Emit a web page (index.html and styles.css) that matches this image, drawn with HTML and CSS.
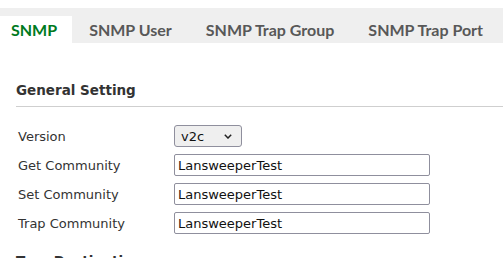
FILE: index.html
```html
<!DOCTYPE html>
<html>
<head>
<meta charset="utf-8">
<link rel="stylesheet" href="styles.css">
</head>
<body>
<div class="page">
  <nav class="tabs">
    <div class="tab active">SNMP</div>
    <div class="tab">SNMP User</div>
    <div class="tab">SNMP Trap Group</div>
    <div class="tab">SNMP Trap Port</div>
  </nav>
  <section class="section">
    <h2 class="section-title">General Setting</h2>
    <div class="form">
      <div class="row">
        <label class="label">Version</label>
        <div class="select">
          <span>v2c</span>
          <svg class="chev" width="8" height="5" viewBox="0 0 8 5"><path d="M0.8 0.8 L4 4 L7.2 0.8" fill="none" stroke="#222" stroke-width="1.5"/></svg>
        </div>
      </div>
      <div class="row">
        <label class="label">Get Community</label>
        <div class="input">LansweeperTest</div>
      </div>
      <div class="row">
        <label class="label">Set Community</label>
        <div class="input">LansweeperTest</div>
      </div>
      <div class="row">
        <label class="label">Trap Community</label>
        <div class="input">LansweeperTest</div>
      </div>
    </div>
    <h2 class="section-title next">Trap Destination</h2>
  </section>
</div>
</body>
</html>
```
FILE: styles.css
```css
* { box-sizing: border-box; }
html, body { margin: 0; padding: 0; background: #fff; overflow: hidden; }
body { font-family: "DejaVu Sans", sans-serif; color: #333; }
.page { padding-top: 8px; }
.tabs {
  display: flex;
  align-items: flex-end;
  height: 35px;
  background: #efefef;
}
.tab {
  height: 27px;
  display: flex;
  align-items: center;
  padding: 0 17px;
  font-family: "Lato", sans-serif;
  font-weight: bold;
  font-size: 16px;
  color: #585858;
  white-space: nowrap;
}
.tab:first-child { padding: 0 15px 0 11px; }
.tab.active { background: #fff; color: #007a1e; }
.section { padding: 0 0 0 16px; }
.section-title {
  margin: 38px 0 0;
  padding-bottom: 6px;
  font-size: 13.5px;
  font-weight: bold;
  color: #333;
  border-bottom: 1px solid #cfcfcf;
  line-height: 19px;
}
.form { padding: 18px 0 0 2px; display: flex; flex-direction: column; gap: 7px; }
.row { display: flex; align-items: center; height: 22px; }
.label { width: 156px; font-size: 13px; color: #333; }
.select {
  width: 68px; height: 22px;
  border: 1px solid #8f8f9d;
  border-radius: 3px;
  background: #efefef;
  display: flex; align-items: center; justify-content: space-between;
  padding: 0 9px 0 6px;
  font-size: 13px; color: #111;
}
.chev { display: block; }
.input {
  width: 256px; height: 22px;
  border: 1px solid #8f8f9d;
  border-radius: 2px;
  display: flex; align-items: center;
  padding: 0 3px;
  font-size: 13px; color: #111;
}
.section-title.next { margin-top: 18px; border-bottom: none; }
```
